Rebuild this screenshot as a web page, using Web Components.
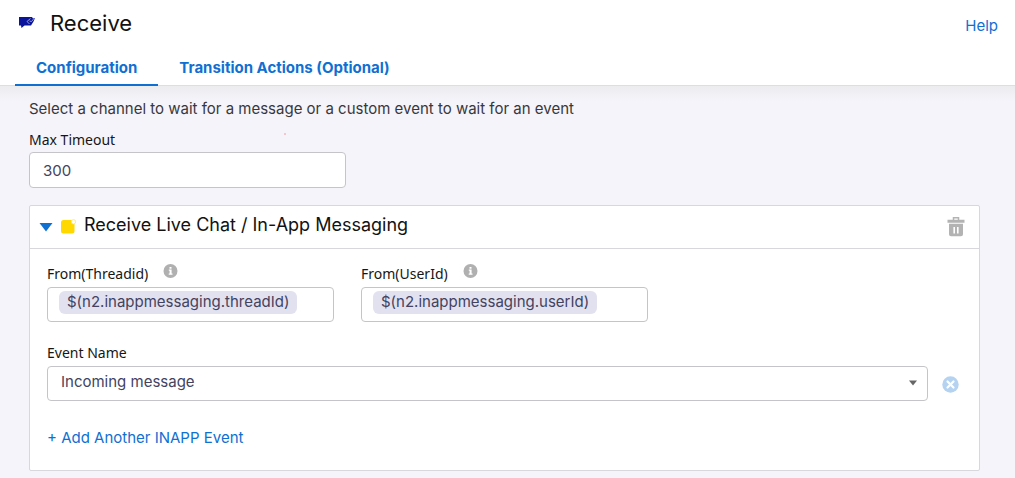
<!DOCTYPE html>
<html lang="en">
<head>
<meta charset="utf-8">
<meta name="viewport" content="width=device-width, initial-scale=1">
<title>Receive</title>
<style>
  :root {
    --link: #1070d2;
    --line: #c5c5c9;
    --card-line: #d8d8dc;
    --value: #43435f;
    --page: #f5f4fa;
  }
  html, body { margin: 0; min-height: 100%; background: var(--page); }
  body { font: 15px/20px Inter, "Liberation Sans", sans-serif; color: #121212; }
</style>
</head>
<body>
<receive-node>
  <node-header slot="header" heading="Receive">
    <node-tab active>Configuration</node-tab>
    <node-tab>Transition Actions (Optional)</node-tab>
  </node-header>
  <p>Select a channel to wait for a message or a custom event to wait for an event</p>
  <text-field label="Max Timeout" value="300"></text-field>
  <channel-card heading="Receive Live Chat / In-App Messaging">
    <field-row>
      <token-field label="From(Threadid)" token="$(n2.inappmessaging.threadId)"></token-field>
      <token-field label="From(UserId)" token="$(n2.inappmessaging.userId)"></token-field>
    </field-row>
    <event-select label="Event Name" value="Incoming message"></event-select>
    <add-link>+ Add Another INAPP Event</add-link>
  </channel-card>
</receive-node>

<script>
const labelStyle = `
  label { font: 14px/20px "Noto Sans", "Liberation Sans", sans-serif; color: #161616; }
`;
const resetStyle = `
  *, *::before { box-sizing: border-box; }
  button { padding: 0; border: 0; background: none; font: inherit; cursor: pointer; }
  svg { display: block; }
`;

function define(name, render) {
  customElements.define(name, class extends HTMLElement {
    constructor() {
      super();
      this.attachShadow({ mode: "open" });
    }
    connectedCallback() {
      const attr = key => this.getAttribute(key) || "";
      this.shadowRoot.innerHTML = `<style>${resetStyle}</style>` + render(attr, this);
    }
  });
}

define("receive-node", () => `
  <style>
    :host { display: block; }
    main {
      padding: 13px 35px 7px 29px;
      background: linear-gradient(#ececef, var(--page) 15px);
    }
    ::slotted(p) { margin: 0 0 11px; color: #38383c; }
  </style>
  <slot name="header"></slot>
  <main><slot></slot></main>
`);

define("node-header", attr => `
  <style>
    :host { display: block; background: #fff; border-bottom: 1px solid #dedee2; }
    .top { display: flex; align-items: flex-start; padding: 8px 17px 0 18px; }
    .logo { margin: 6px 14px 0 0; }
    h1 { margin: 0; font-size: 22px; line-height: 30px; font-weight: 400; }
    a { margin: 8px 0 0 auto; color: var(--link); text-decoration: none; }
    nav { display: flex; padding: 14px 15px 0; margin-bottom: -1px; }
  </style>
  <div class="top">
    <svg class="logo" width="18" height="16" viewBox="0 0 18 16" aria-hidden="true">
      <path fill="#0a159b" d="M1 3h13l1 1.500L17 4l-1.500 3.500L13 11.500H6.500L3.500 14 3 11.500H1z"/>
      <path fill="none" stroke="#a4a9e6" stroke-width=".9" d="M12.500 4.500L9 7.500 11.500 10M16 4.500L13.500 7.500 11.500 7"/>
    </svg>
    <h1>${attr("heading")}</h1>
    <a href="#help">Help</a>
  </div>
  <nav role="tablist"><slot></slot></nav>
`);

define("node-tab", (attr, host) => `
  <style>
    :host { display: block; }
    button {
      display: block; padding: 6px 21px 6px; line-height: 20px;
      border-bottom: 2px solid transparent;
      color: var(--link); font-weight: 700;
    }
    button[aria-selected="true"] { border-color: var(--link); }
  </style>
  <button type="button" role="tab" aria-selected="${host.hasAttribute("active")}"><slot></slot></button>
`);

define("text-field", attr => `
  <style>
    ${labelStyle}
    :host { display: block; width: 317px; max-width: 100%; margin-bottom: 17px; }
    .head { display: flex; justify-content: space-between; margin-bottom: 2px; }
    .dot { width: 2px; height: 2px; margin: 3px 60px 0 0; background: #f6c6cd; }
    input {
      display: block; width: 100%; height: 36px; padding: 0 13px;
      border: 1px solid var(--line); border-radius: 4px; background: #fff;
      font: inherit; color: var(--value);
    }
  </style>
  <div class="head"><label for="field">${attr("label")}</label><span class="dot"></span></div>
  <input id="field" type="text" value="${attr("value")}">
`);

define("channel-card", attr => `
  <style>
    :host { display: block; background: #fff; border: 1px solid var(--card-line); border-radius: 2px; }
    header {
      display: flex; align-items: center; height: 43px; padding: 0 14px 0 9px;
      border-bottom: 1px solid var(--card-line);
    }
    .mark { margin: 0 7px 0 8px; }
    h2 { margin: 0 auto 4px 0; font-size: 18px; line-height: 24px; font-weight: 400; }
    .body { padding: 15px 20px 22px 17px; }
  </style>
  <header>
    <button type="button" aria-label="Collapse">
      <svg width="14" height="10" viewBox="0 0 14 10"><path fill="#1070d2" d="M.5 1h13L7 9.500z"/></svg>
    </button>
    <svg class="mark" width="16" height="16" viewBox="0 0 16 16" aria-hidden="true">
      <rect x="0" y="1" width="13.500" height="13.500" rx="2.500" fill="#ffd800"/>
      <circle cx="12.500" cy="2.800" r="2.200" fill="#fff" stroke="#ffe566" stroke-width=".8"/>
    </svg>
    <h2>${attr("heading")}</h2>
    <button type="button" aria-label="Delete channel">
      <svg width="18" height="20" viewBox="0 0 18 20">
        <path fill="none" stroke="#b3b3b3" stroke-width="1.500" d="M6.500 3V.8h5V3"/>
        <path fill="#b3b3b3" d="M.5 2.800h17v3H.5zM2 6.800h14v10.500a2 2 0 0 1-2 2H4a2 2 0 0 1-2-2z"/>
        <path stroke="#fff" stroke-width="1.600" d="M7.200 10v6.500M10.800 10v6.500"/>
      </svg>
    </button>
  </header>
  <div class="body"><slot></slot></div>
`);

define("field-row", () => `
  <style>
    :host { display: flex; flex-wrap: wrap; gap: 20px 27px; margin-bottom: 21px; }
  </style>
  <slot></slot>
`);

define("token-field", attr => `
  <style>
    ${labelStyle}
    :host { display: block; width: 287px; }
    .head { display: flex; gap: 15px; margin-bottom: 3px; }
    .box {
      display: flex; align-items: flex-start; height: 35px; padding: 3px 11px;
      border: 1px solid var(--line); border-radius: 4px; background: #fff;
    }
    .token {
      flex: none; padding: 0 8px 1px; border-radius: 6px; background: #e2e1ef;
      line-height: 22px; color: var(--value);
    }
    input { flex: 1; min-width: 0; width: 0; padding: 0; border: 0; outline: 0; font: inherit; }
  </style>
  <div class="head">
    <label for="field">${attr("label")}</label>
    <svg width="15" height="15" viewBox="0 0 15 15" role="img" aria-label="Info">
      <circle cx="7.500" cy="7" r="7" fill="#b0b0b0"/>
      <path fill="#fff" d="M6.500 3h2v1.700h-2zM5.800 5.600h2.800v4h.9v1.200H5.700V9.600h.9V6.700h-.8z"/>
    </svg>
  </div>
  <div class="box"><span class="token">${attr("token")}</span><input id="field" type="text"></div>
`);

define("event-select", attr => `
  <style>
    ${labelStyle}
    :host { display: block; margin-bottom: 27px; }
    label { display: block; margin-bottom: 3px; }
    .line { display: flex; align-items: center; gap: 14px; }
    .box { flex: 1; display: grid; align-items: center; }
    .box > * { grid-area: 1 / 1; }
    select {
      appearance: none; width: 100%; height: 35px; padding: 0 30px 3px 13px;
      border: 1px solid var(--line); border-radius: 4px; background: #fff;
      font: inherit; color: var(--value);
    }
    .box svg { justify-self: end; margin: 0 10px 2px 0; pointer-events: none; }
    .line > button { padding-top: 2px; }
  </style>
  <label for="field">${attr("label")}</label>
  <div class="line">
    <div class="box">
      <select id="field"><option>${attr("value")}</option></select>
      <svg width="10" height="6" viewBox="0 0 10 6"><path fill="#666" d="M1 .5h8L5 5.500z"/></svg>
    </div>
    <button type="button" aria-label="Remove event">
      <svg width="17" height="17" viewBox="0 0 17 17">
        <circle cx="8.500" cy="8.500" r="8.200" fill="#b5d3f1"/>
        <path stroke="#fff" stroke-width="2.200" stroke-linecap="round" d="M5.500 5.500l6 6M11.500 5.500l-6 6"/>
      </svg>
    </button>
  </div>
`);

define("add-link", () => `
  <style>
    :host { display: block; }
    button { display: block; color: var(--link); }
  </style>
  <button type="button"><slot></slot></button>
`);
</script>
</body>
</html>
